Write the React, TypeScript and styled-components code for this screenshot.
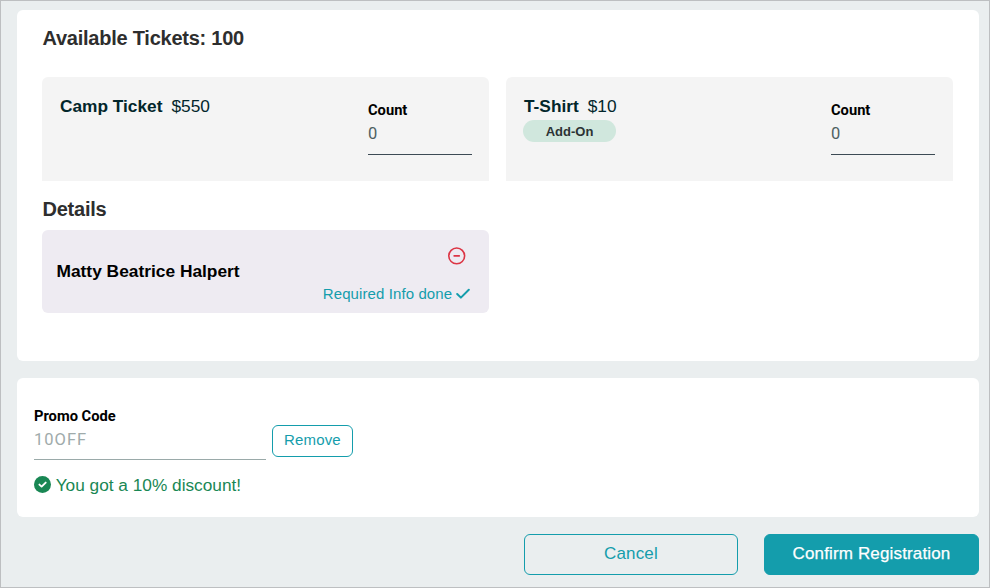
import React from "react";
import styled, { createGlobalStyle } from "styled-components";

const teal = "#149dac";

const GlobalStyle = createGlobalStyle`
  * { box-sizing: border-box; }
  body { margin: 0; font-family: "Liberation Sans", Arial, sans-serif; }
  button, input { font-family: inherit; margin: 0; }
`;

const Page = styled.main`
  width: 990px;
  height: 588px;
  padding: 9px 10px 0 16px;
  background: #eaeeef;
  border: 1px solid #bdbfc1;
  overflow: hidden;
`;

const Card = styled.section<{ $height: number }>`
  height: ${(p) => p.$height}px;
  margin-bottom: 17px;
  background: #fff;
  border-radius: 6px;
`;

const TicketsCard = styled(Card)`
  padding: 16px 26px 0 25px;
`;

const Heading = styled.h2`
  margin: 0;
  padding-left: 0.5px;
  font-size: 20px;
  letter-spacing: -0.24px;
  line-height: 24px;
  font-weight: 700;
  color: #2e2e2e;
`;

const Grid = styled.div`
  display: grid;
  grid-template-columns: 447px 447px;
  column-gap: 17px;
  margin: 27px 0 16px;
`;

const Ticket = styled.article<{ $inset: number }>`
  display: flex;
  justify-content: space-between;
  height: 104px;
  padding: 19px ${(p) => p.$inset}px 0 18px;
  background: #f4f4f4;
  border-radius: 6px 6px 0 0;
`;

const TicketTitle = styled.div`
  display: flex;
  gap: 9px;
  font-size: 17.3px;
  line-height: 20px;
  color: #02262b;
`;

const Badge = styled.span`
  display: block;
  width: 93px;
  height: 22px;
  margin: 4px 0 0 -1px;
  border-radius: 11px;
  background: #d0e7dd;
  color: #2c3335;
  font-size: 13px;
  line-height: 23px;
  font-weight: 700;
  text-align: center;
`;

const Field = styled.label<{ $width: number }>`
  display: flex;
  flex-direction: column;
  width: ${(p) => p.$width}px;
  font-family: Roboto, sans-serif;
`;

const CountField = styled(Field)`
  padding-top: 5px;
`;

const Label = styled.span`
  font-size: 14.7px;
  line-height: 18px;
  font-weight: 700;
  color: #000;
`;

const Input = styled.input<{ $muted?: boolean }>`
  width: 100%;
  height: ${(p) => (p.$muted ? 35 : 36)}px;
  padding: 0 0 ${(p) => (p.$muted ? 6 : 7)}px;
  border: 0;
  border-bottom: 1px solid ${(p) => (p.$muted ? "#9aaaa9" : "#3c4a54")};
  border-radius: 0;
  outline: 0;
  background: transparent;
  font-family: Roboto, sans-serif;
  font-size: 16.5px;
  letter-spacing: ${(p) => (p.$muted ? "1px" : "0")};
  color: ${(p) => (p.$muted ? "#a0abab" : "#4f5f62")};
`;

const Attendee = styled.article`
  display: flex;
  justify-content: space-between;
  width: 447px;
  height: 83px;
  margin-top: 9px;
  padding: 15.7px 19.3px 0 14.5px;
  border-radius: 6px;
  background: #eeebf2;
`;

const AttendeeName = styled.strong`
  padding-top: 15.3px;
  font-size: 17.35px;
  line-height: 20px;
  color: #000;
`;

const AttendeeActions = styled.div`
  display: flex;
  flex-direction: column;
  align-items: flex-end;
`;

const RemoveAttendee = styled.button`
  width: 20px;
  height: 20px;
  margin-right: 3px;
  padding: 0;
  border: 0;
  background: none;
  svg { display: block; }
`;

const Status = styled.div`
  display: flex;
  align-items: center;
  gap: 3.5px;
  margin-top: 18px;
  font-size: 15px;
  letter-spacing: 0.1px;
  line-height: 20px;
  color: ${teal};
`;

const PromoCard = styled(Card)`
  padding: 29px 17px 0;
`;

const PromoRow = styled.div`
  display: flex;
  gap: 6px;
`;

const OutlineButton = styled.button`
  border: 1px solid ${teal};
  border-radius: 6px;
  padding: 0;
  background: transparent;
  color: ${teal};
`;

const RemoveCode = styled(OutlineButton)`
  width: 81px;
  height: 32px;
  margin-top: 18px;
  padding-bottom: 3px;
  font-size: 15px;
  letter-spacing: 0.15px;
`;

const Discount = styled.p`
  display: flex;
  align-items: center;
  gap: 4.7px;
  margin: 15px 0 0;
  font-size: 17.25px;
  line-height: 20px;
  color: #198754;
  svg { margin-bottom: 1px; }
`;

const Footer = styled.footer`
  display: flex;
  justify-content: flex-end;
  gap: 26px;
`;

const CancelButton = styled(OutlineButton)`
  width: 214px;
  height: 41px;
  padding-bottom: 2px;
  font-size: 17px;
  letter-spacing: 0.15px;
`;

const ConfirmButton = styled(CancelButton)`
  width: 215px;
  background: ${teal};
  color: #fff;
  -webkit-text-stroke: 0.25px #fff;
`;

const MinusCircle = () => (
  <svg width="20" height="20" viewBox="0 0 20 20" fill="none" stroke="#dc3545" strokeWidth="1.6">
    <circle cx="9.7" cy="9.9" r="7.9" />
    <path d="M7.1 9.9h5.2" strokeLinecap="round" />
  </svg>
);

const Check = () => (
  <svg width="14" height="12" viewBox="0 0 14 12" fill="none" stroke={teal} strokeWidth="2">
    <path d="M1.2 6 4.9 9.6 12.8 1.8" strokeLinecap="round" strokeLinejoin="round" />
  </svg>
);

const CheckCircle = () => (
  <svg width="17" height="17" viewBox="0 0 17 17" fill="none">
    <circle cx="8.5" cy="8.5" r="8.5" fill="#198754" />
    <path d="m5.4 8.6 2.2 2 4.1-4" stroke="#fff" strokeWidth="1.9" strokeLinecap="round" strokeLinejoin="round" />
  </svg>
);

const tickets = [
  { name: "Camp Ticket", price: "$550", addOn: false, inset: 17 },
  { name: "T-Shirt", price: "$10", addOn: true, inset: 18 },
];

export default function App() {
  return (
    <>
      <GlobalStyle />
      <Page>
        <TicketsCard $height={351}>
          <Heading>Available Tickets: 100</Heading>
          <Grid>
            {tickets.map((t) => (
              <Ticket key={t.name} $inset={t.inset}>
                <div>
                  <TicketTitle>
                    <strong>{t.name}</strong>
                    <span>{t.price}</span>
                  </TicketTitle>
                  {t.addOn && <Badge>Add-On</Badge>}
                </div>
                <CountField $width={104}>
                  <Label>Count</Label>
                  <Input defaultValue="0" />
                </CountField>
              </Ticket>
            ))}
          </Grid>
          <Heading>Details</Heading>
          <Attendee>
            <AttendeeName>Matty Beatrice Halpert</AttendeeName>
            <AttendeeActions>
              <RemoveAttendee aria-label="Remove attendee">
                <MinusCircle />
              </RemoveAttendee>
              <Status>
                Required Info done
                <Check />
              </Status>
            </AttendeeActions>
          </Attendee>
        </TicketsCard>
        <PromoCard $height={139}>
          <PromoRow>
            <Field $width={232}>
              <Label>Promo Code</Label>
              <Input $muted defaultValue="10OFF" />
            </Field>
            <RemoveCode>Remove</RemoveCode>
          </PromoRow>
          <Discount>
            <CheckCircle />
            You got a 10% discount!
          </Discount>
        </PromoCard>
        <Footer>
          <CancelButton>Cancel</CancelButton>
          <ConfirmButton>Confirm Registration</ConfirmButton>
        </Footer>
      </Page>
    </>
  );
}
